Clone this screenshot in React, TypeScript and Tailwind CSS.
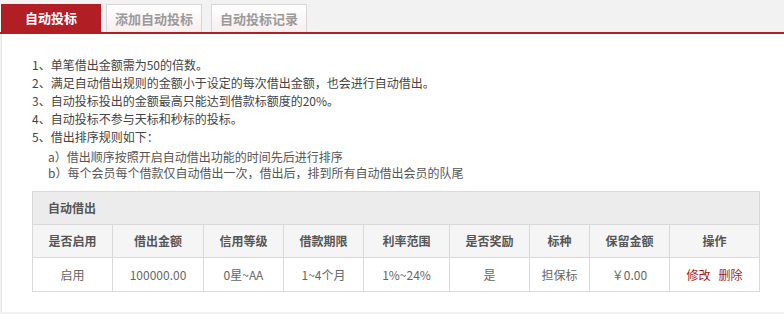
const font = { fontFamily: '"Noto Sans CJK SC", "Liberation Sans", sans-serif' }

const rules = [
  '1、单笔借出金额需为50的倍数。',
  '2、满足自动借出规则的金额小于设定的每次借出金额，也会进行自动借出。',
  '3、自动投标投出的金额最高只能达到借款标额度的20%。',
  '4、自动投标不参与天标和秒标的投标。',
  '5、借出排序规则如下：',
]

const cols = [
  { name: '是否启用', w: 80 },
  { name: '借出金额', w: 91 },
  { name: '信用等级', w: 80 },
  { name: '借款期限', w: 80 },
  { name: '利率范围', w: 86 },
  { name: '是否奖励', w: 80 },
  { name: '标种', w: 60 },
  { name: '保留金额', w: 80 },
  { name: '操作', w: 90 },
]

const row = ['启用', '100000.00', '0星~AA', '1~4个月', '1%~24%', '是', '担保标', '￥0.00']

export default function App() {
  return (
    <div className="w-[784px] h-[314px] bg-[#f2f2f2] overflow-hidden" style={font}>
      {/* tabs */}
      <div className="flex items-end h-[32px] pl-px">
        <div className="w-[100px] h-[28px] bg-[#b11f24] text-white text-[13px] font-bold flex items-center justify-center">
          自动投标
        </div>
        <div className="ml-[5px] w-[96px] h-[28px] border border-b-0 border-[#d6d6d6] bg-gradient-to-b from-white to-[#f8eeee] text-[#9a9a9a] text-[13px] font-bold flex items-center justify-center">
          添加自动投标
        </div>
        <div className="ml-[9px] w-[96px] h-[28px] border border-b-0 border-[#d6d6d6] bg-gradient-to-b from-white to-[#f8eeee] text-[#9a9a9a] text-[13px] font-bold flex items-center justify-center">
          自动投标记录
        </div>
      </div>
      <div className="h-[2px] bg-[#b11f24]" />

      {/* panel */}
      <div className="ml-px h-[278px] bg-white border-l border-[#e6e6e6] pl-[30px] pt-[22px]">
        <ul className="text-[12px] text-[#444] leading-[18px]">
          {rules.map((r) => (
            <li key={r}>{r}</li>
          ))}
        </ul>
        <ul className="mt-[3px] pl-[16px] text-[12px] text-[#555] leading-[16px]">
          <li>a）借出顺序按照开启自动借出功能的时间先后进行排序</li>
          <li>b）每个会员每个借款仅自动借出一次，借出后，排到所有自动借出会员的队尾</li>
        </ul>

        <table className="mt-[10px] w-[727px] table-fixed border-collapse text-[12px]">
          <colgroup>
            {cols.map((c) => (
              <col key={c.name} style={{ width: c.w }} />
            ))}
          </colgroup>
          <thead>
            <tr>
              <th colSpan={9} className="h-[33px] bg-[#ececec] border border-[#d9d9d9] text-left pl-[15px] font-bold text-[#555]">
                自动借出
              </th>
            </tr>
            <tr>
              {cols.map((c) => (
                <th key={c.name} className="h-[33px] bg-[#f5f5f5] border border-[#d9d9d9] font-bold text-[#555] text-center">
                  {c.name}
                </th>
              ))}
            </tr>
          </thead>
          <tbody>
            <tr>
              {row.map((v, i) => (
                <td key={i} className="h-[34px] border border-[#d9d9d9] text-center text-[#666]">
                  {v}
                </td>
              ))}
              <td className="h-[34px] border border-[#d9d9d9] text-center text-[#a51c22]">
                <span>修改</span>
                <span className="ml-[8px]">删除</span>
              </td>
            </tr>
          </tbody>
        </table>
      </div>
    </div>
  )
}
